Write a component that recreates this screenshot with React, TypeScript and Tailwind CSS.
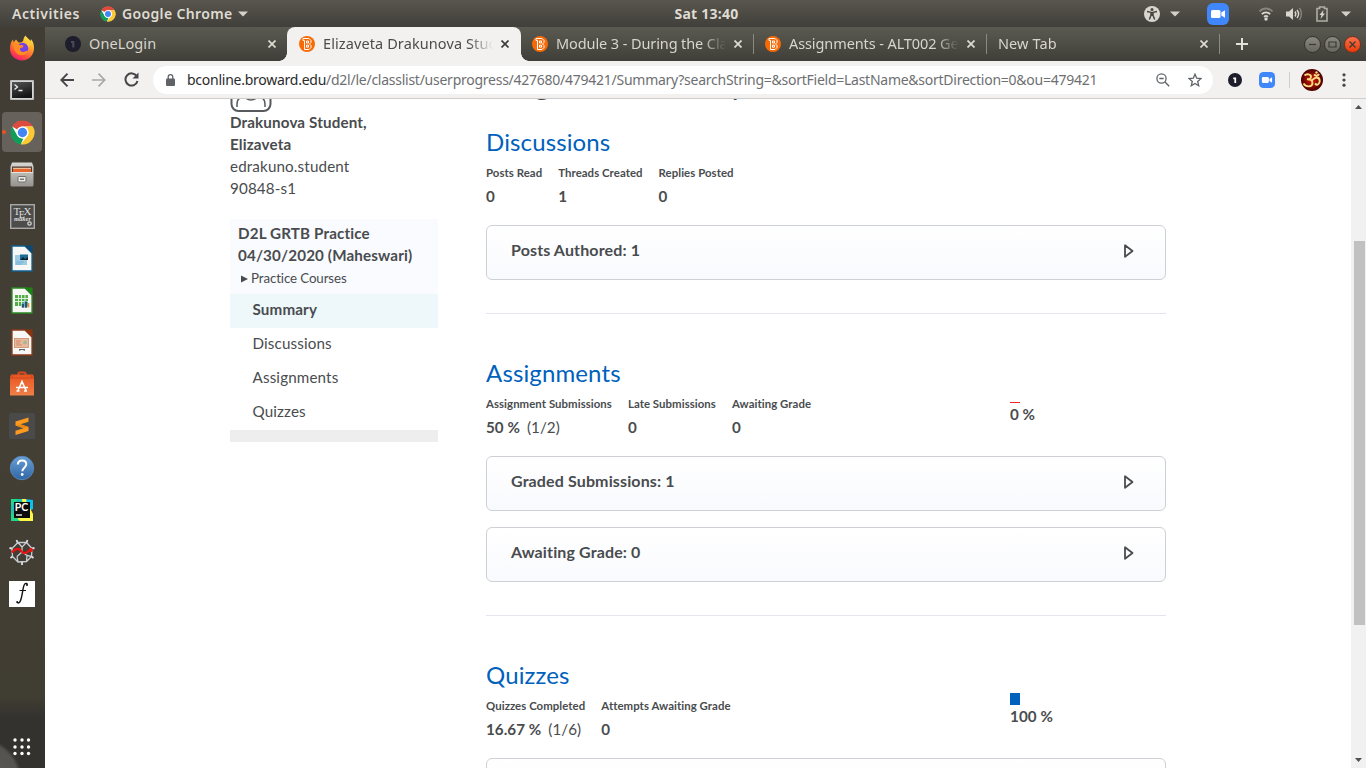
import React from "react";

const UI = "font-['Noto_Sans','Liberation_Sans',sans-serif]";

function ChromeLogo({ size }: { size: number }) {
  return (
    <svg width={size} height={size} viewBox="0 0 48 48" className="shrink-0">
      <circle cx="24" cy="24" r="22" fill="#fff" />
      <path d="M24 1a23 23 0 0 1 19.9 11.500H24a11.500 11.500 0 0 0-10 5.800L4.100 12.500A23 23 0 0 1 24 1z" fill="#dd4b3e" />
      <path d="M4.100 12.500 14 29.700a11.500 11.500 0 0 0 10 5.800l1.800-.2L20.500 46.800A23 23 0 0 1 4.100 12.500z" fill="#109d58" />
      <path d="M43.900 12.500A23 23 0 0 1 20.500 46.800L34 29.700a11.500 11.500 0 0 0 0-11.500l-4-5.700z" fill="#fcc934" />
      <circle cx="24" cy="24" r="11.500" fill="#fff" />
      <circle cx="24" cy="24" r="9" fill="#4285f4" />
    </svg>
  );
}

function Firefox() {
  return (
    <svg width="26" height="26" viewBox="0 0 26 26">
      <defs>
        <linearGradient id="ffx" x1="0.8" y1="0" x2="0.3" y2="1">
          <stop offset="0" stopColor="#fff44f" />
          <stop offset="0.4" stopColor="#ffa02a" />
          <stop offset="0.75" stopColor="#ff4f3c" />
          <stop offset="1" stopColor="#f0157c" />
        </linearGradient>
      </defs>
      <path d="M16.500.5c1 2 3.500 3.500 5 5.500.5-.6.5-1.200.4-2 2.600 3 3.300 6.500 3.100 10-.4 6.500-5.500 11.500-12 11.500S1 20.500 1 14c0-4 1-7.500 3-9.500l.6 3L7 4.500 9.500 7.500c2 0 3.500-.4 4.500-1.500.5-2 1-4 2.500-5.500z" fill="url(#ffx)" />
      <circle cx="13.500" cy="13.500" r="5.700" fill="#7542e5" />
      <path d="M4 9c3-1.500 5 0 6.500 1 2 0 4 0 4 1s-2 2-3.500 2.300c-.5 2 1 3.700 3 3.700 2.500 0 3-1.500 5-1.200-1 3-3.500 4.500-6.500 4.500C8 20.300 4.500 16 4 9z" fill="#ff8c22" />
      <path d="M14 7c3 .3 5.500 2.500 5.500 5.500 1-1 1.500-3 .5-5z" fill="#ffcf3a" />
    </svg>
  );
}

function Terminal() {
  return (
    <svg width="24" height="20" viewBox="0 0 24 20">
      <defs>
        <linearGradient id="term" x1="0" y1="0" x2="0.4" y2="1">
          <stop offset="0" stopColor="#555" />
          <stop offset="1" stopColor="#151515" />
        </linearGradient>
      </defs>
      <rect width="24" height="20" rx="1" fill="#bdbdbd" />
      <rect x="1.500" y="1.500" width="21" height="17" fill="#eee" />
      <rect x="2" y="2" width="20" height="16" fill="url(#term)" />
      <path d="M4.500 4.500 7.500 7l-3 2.500M8.500 10.500h4" fill="none" stroke="#eee" strokeWidth="1.300" />
    </svg>
  );
}

function Files() {
  return (
    <svg width="24" height="25" viewBox="0 0 24 25">
      <defs>
        <linearGradient id="fil" x1="0" y1="0" x2="0" y2="1">
          <stop offset="0" stopColor="#d8d6d2" />
          <stop offset="1" stopColor="#96938e" />
        </linearGradient>
      </defs>
      <path d="M2 .5h20l1.500 4V23a1.500 1.500 0 0 1-1.500 1.500H2A1.500 1.500 0 0 1 .5 23V4.500z" fill="url(#fil)" />
      <rect x="2" y="4.500" width="20" height="5.500" fill="#4c3a30" />
      <path d="M3 6.500h18V10H3z" fill="#e9662a" />
      <path d="M3 6.300h18" stroke="#ffd8b8" />
      <path d="M1 10.500h22" stroke="#e5e3df" />
      <rect x="8" y="14.500" width="8" height="5.500" rx="1" fill="#eceae7" stroke="#706e69" />
      <rect x="10" y="16.500" width="4" height="1.500" fill="#777" />
    </svg>
  );
}

function TexMaker() {
  return (
    <svg width="25" height="25" viewBox="0 0 25 25">
      <rect x=".7" y=".7" width="23.600" height="23.600" fill="#4c4c4b" stroke="#a9a9a7" strokeWidth="1.400" />
      <g fill="#dededc" fontFamily="Liberation Serif, serif">
        <text x="3.500" y="11" fontSize="11">T</text>
        <text x="8.800" y="13.500" fontSize="10">E</text>
        <text x="13.500" y="11" fontSize="11">X</text>
        <text x="4" y="17.300" fontSize="6.500" fontStyle="italic" fontWeight="bold">maker</text>
      </g>
      <circle cx="19.500" cy="19.500" r="1.700" fill="none" stroke="#d5d5d3" strokeWidth="1.300" />
    </svg>
  );
}

function Doc({ color, dark, children }: { color: string; dark: string; children: React.ReactNode }) {
  return (
    <svg width="22" height="27" viewBox="0 0 22 27">
      <path d="M1 1h13l7 7v18H1z" fill="#f7f7f5" stroke={color} strokeWidth="1.300" />
      <path d="M13 .4h8.600V9z" fill={dark} />
      {children}
    </svg>
  );
}

function Software() {
  return (
    <svg width="26" height="26" viewBox="0 0 26 26">
      <defs>
        <linearGradient id="sw" x1="0" y1="0" x2="0" y2="1">
          <stop offset="0" stopColor="#e95420" />
          <stop offset="1" stopColor="#f08048" />
        </linearGradient>
      </defs>
      <path d="M9.500 5V2.500a1 1 0 0 1 1-1h5a1 1 0 0 1 1 1V5" fill="none" stroke="#d64a20" strokeWidth="2" />
      <path d="M2 3.500h22l1 3v18H1v-18z" fill="url(#sw)" />
      <path d="M1 7h24M4 3.500 3 7M22 3.500 23 7" stroke="#c8421c" strokeWidth=".8" />
      <path d="M9 19.500 13 10.500l4 9M10.500 16.500h5M7.500 20h3M15 20h3M7 16.500h12" fill="none" stroke="#fff" strokeWidth="1.600" />
    </svg>
  );
}

function Sublime() {
  return (
    <svg width="26" height="26" viewBox="0 0 26 26">
      <rect width="26" height="26" rx="1.500" fill="#4a4a4a" />
      <path d="M6.500 8.500 19.500 4.500v4.300L11.500 11.300l8 2.700v4L6.500 22v-4.200l8-2.600-8-2.600z" fill="#ff9a1f" />
      <path d="m6.500 12.600 8 2.600 5-1.200-8-2.700z" fill="#e98a10" />
    </svg>
  );
}

function Help() {
  return (
    <svg width="26" height="26" viewBox="0 0 26 26">
      <defs>
        <linearGradient id="hp" x1="0" y1="0" x2="0" y2="1">
          <stop offset="0" stopColor="#6ba0d6" />
          <stop offset="1" stopColor="#2f66a5" />
        </linearGradient>
      </defs>
      <circle cx="13" cy="13" r="11.700" fill="url(#hp)" stroke="#5587bd" />
      <path d="M8.800 9.500c.2-2.700 2-4 4.300-4 2.600 0 4.200 1.500 4.200 3.700 0 3.300-4 3.600-4 7" fill="none" stroke="#fff" strokeWidth="2" />
      <circle cx="13.200" cy="19.500" r="1.400" fill="#fff" />
    </svg>
  );
}

function PyCharm() {
  return (
    <svg width="24" height="24" viewBox="0 0 24 24">
      <path d="M1 1h11l3 11-3 11H1z" fill="#21d789" />
      <path d="M1 8 8 1h7v5L5 22H1z" fill="#1fc4a8" />
      <path d="m14 1 9 1v9l-9 4z" fill="#07c3f2" />
      <path d="M12 1h4l1 5-4 2zM5 23l15-13 3 6v7z" fill="#fcf84a" />
      <path d="M1 15v8h9z" fill="#21d789" />
      <rect x="4" y="4" width="16" height="16" fill="#0b0b0b" />
      <text x="4.800" y="13.300" fontSize="10.500" fontWeight="bold" fill="#fff" fontFamily="Lato, sans-serif">PC</text>
      <path d="M6 17h6" stroke="#fff" strokeWidth="1.300" />
    </svg>
  );
}

function Spyder() {
  return (
    <svg width="26" height="26" viewBox="0 0 26 26" fill="none">
      <path d="m9 3.500 8.500 0 5.500 6-.5 8-5 5-8.500.5-5.500-5.500-.5-8zM13 13 13 8l4.500-4.500M13 8 9 3.500M13 13l-5 4.500M13 13l5 3.500 4.500 1M8 17.500l1 5.500M18 16.500l-.5 6" stroke="#c9ccd3" strokeWidth="1.300" />
      <path d="M8.500 3.500 7.500 1M17.500 3.500 18.500 1M23 9.500l2.500-.5M22.500 17.500 24.500 19M13 23v3M3.500 17.500 1.500 19M3 9.500.5 9" stroke="#dcdfe4" strokeWidth="1.800" />
      <path d="M3 13.500C5 11 8 9 10.500 10.500S13 14.500 16 14c3 0 4-3.500 7-3.500" stroke="#ee1111" strokeWidth="2.200" />
      <circle cx="22" cy="11" r="2" fill="#ee1111" />
    </svg>
  );
}

function FontViewer() {
  return (
    <svg width="26" height="26" viewBox="0 0 26 26">
      <rect width="26" height="26" fill="#fff" />
      <path d="M18.300 3.600c-.2-1.200-1.200-1.400-2-1-1.800.9-2.100 4.600-2.700 8-.6 3.600-1.200 7-2.300 9.500-.7 1.800-2.500 2.600-3.100 1" fill="none" stroke="#111" strokeWidth="1.400" />
      <path d="M10.500 9.500h6.500" stroke="#111" strokeWidth="1" />
      <circle cx="18" cy="4" r="1" fill="#111" />
      <circle cx="8.200" cy="21" r="1" fill="#111" />
    </svg>
  );
}

function Dock() {
  const icons = [
    <Firefox />,
    <Terminal />,
    <ChromeLogo size={25} />,
    <Files />,
    <TexMaker />,
    <Doc color="#11608f" dark="#0b4a74">
      <rect x="4" y="10" width="12" height="10" fill="#9ecbe4" />
      <rect x="9" y="9.500" width="8" height="5.500" fill="#1d6d92" />
      <path d="m9 15 3-3 2 2 3-2v3z" fill="#123" />
      <path d="M5 17h8M5 19h6" stroke="#6fb0d2" />
    </Doc>,
    <Doc color="#2a8a22" dark="#1e8216">
      <rect x="4" y="8" width="13" height="11" fill="#54ab48" />
      <path d="M4 11.500h13M4 14.500h13M7.500 8v11M10.500 8v11M14 8v11" stroke="#e8f5e6" strokeWidth=".9" />
      <path d="M11 20.500v-4h2v4M14 20.500v-6h2v6" stroke="#5ba8d6" />
      <path d="M17.500 20.500V16" stroke="#f18a3c" strokeWidth="1.600" />
    </Doc>,
    <Doc color="#8c3a1a" dark="#8a3410">
      <rect x="3.500" y="9.500" width="14" height="9" fill="#e9b99d" stroke="#c98a68" strokeWidth=".8" />
      <path d="M5 12h5M5 14h4M5 16h6" stroke="#cf8a68" />
      <circle cx="14" cy="13.500" r="2" fill="#a5b890" />
      <path d="M8 20.500h6M8.500 22l1-1.500M13.500 22l-1-1.500" stroke="#666" fill="none" />
    </Doc>,
    <Software />,
    <Sublime />,
    <Help />,
    <PyCharm />,
    <Spyder />,
    <FontViewer />,
  ];
  return (
    <aside className="flex w-[45px] shrink-0 flex-col justify-between bg-[linear-gradient(#413d34_0px,#443f35_400px,#403d32_670px,#34322f_690px,#34322f_741px)]">
      <div className="flex flex-col">
        {icons.map((icon, i) => (
          <div key={i} className="relative flex h-[42px] w-[44px] items-center justify-center">
            {i === 2 && (
              <>
                <div className="absolute inset-y-px left-0.5 w-10 rounded bg-[#66625b]" />
                <div className="absolute left-0.5 top-[19px] size-1 rounded-full bg-[#e95420]" />
              </>
            )}
            <div className="relative">{icon}</div>
          </div>
        ))}
      </div>
      <div className="flex h-[64px] bg-[radial-gradient(circle_at_-20px_76px,#5d5c59_0px,#55534f_38px,transparent_42px)] pl-[13px] pt-[34px]">
        <svg width="18" height="18" viewBox="0 0 18 18" fill="#fff">
          {[2, 9, 15.5].map((y) => [2, 9, 15.5].map((x) => <circle key={`${x}-${y}`} cx={x} cy={y} r="1.700" />))}
        </svg>
      </div>
    </aside>
  );
}

function Caret() {
  return (
    <svg width="10" height="6" viewBox="0 0 10 6">
      <path d="M0 .5h10L5 5.500z" fill="#d3d1cb" />
    </svg>
  );
}

function ZoomApp({ size }: { size: number }) {
  return (
    <svg width={size} height={size} viewBox="0 0 22 22" className="shrink-0">
      <rect width="22" height="22" rx="6" fill="#4087fc" />
      <rect x="4" y="7" width="9.500" height="8" rx="1.500" fill="#fff" />
      <path d="m14.300 9.500 3.700-2.300v7.600l-3.700-2.300z" fill="#fff" />
    </svg>
  );
}

function TopBar() {
  return (
    <header className={`${UI} grid h-[27px] shrink-0 grid-cols-[1fr_auto_1fr] items-center bg-[linear-gradient(#59564e,#413f3a)] text-[14px] font-semibold text-[#dfdbd2]`}>
      <div className="flex items-center pl-3">
        <span className="w-[88px] tracking-[0.55px]">Activities</span>
        <ChromeLogo size={16} />
        <span className="ml-1.5 w-[116px] whitespace-nowrap tracking-[0.35px]">Google Chrome</span>
        <Caret />
      </div>
      <div className="pl-[47px] font-bold tracking-[0.25px]">Sat 13:40</div>
      <div className="flex items-center justify-end pr-[15px]">
        <svg width="16" height="16" viewBox="0 0 16 16">
          <circle cx="8" cy="8" r="8" fill="#d9d6d0" />
          <circle cx="8" cy="3.400" r="1.500" fill="#48463f" />
          <path d="M3 5.500 7 6.300v3L5.300 13.500M13 5.500 9 6.300v3l1.700 4.200M8 6v4" fill="none" stroke="#48463f" strokeWidth="1.500" />
        </svg>
        <span className="ml-2.5 mr-[27px]"><Caret /></span>
        <ZoomApp size={22} />
        <svg width="16" height="14" viewBox="0 0 16 14" className="ml-[29px]" fill="none">
          <path d="M1.500 4.500C5 .5 11 .5 14.500 4.500" stroke="#86837c" strokeWidth="1.800" />
          <path d="M3.800 7.200c2.300-2.500 6.100-2.500 8.400 0M6 9.800c1.200-1 2.800-1 4 0" stroke="#d9d6d0" strokeWidth="1.700" />
          <circle cx="8" cy="12" r="1.700" fill="#d9d6d0" />
        </svg>
        <svg width="17" height="14" viewBox="0 0 17 14" className="ml-3" fill="none">
          <path d="M0 4.500h3L7 1v12L3 9.500H0z" fill="#d9d6d0" />
          <path d="M9 4.500c1 1.500 1 3.500 0 5M11 3c2 2.500 2 5.500 0 8" stroke="#d9d6d0" strokeWidth="1.400" />
          <path d="M13.500 1c2.500 3.500 2.500 8.500 0 12" stroke="#86837c" strokeWidth="1.400" />
        </svg>
        <svg width="12" height="16" viewBox="0 0 12 16" className="ml-[13px]" fill="none">
          <path d="M1 2.500h2.500V1h5v1.500H11V15H1z" stroke="#b0ada6" strokeWidth="1.600" />
          <path d="M7.500 4 3.500 9h2l-1 4 4.500-5.500H6.800z" fill="#d9d6d0" />
        </svg>
        <span className="ml-[13px]"><Caret /></span>
      </div>
    </header>
  );
}

function Cross({ color }: { color: string }) {
  return (
    <svg width="8" height="8" viewBox="0 0 8 8" className="shrink-0">
      <path d="m.5.5 7 7m0-7-7 7" stroke={color} strokeWidth="1.700" />
    </svg>
  );
}

function BIcon() {
  return (
    <svg width="16" height="16" viewBox="0 0 16 16" className="shrink-0">
      <circle cx="8" cy="8" r="8" fill="#f76b07" />
      <path d="M4 2.500h6l2 2v2L10.500 8l1.500 1.500v2l-2 2H5.500V4.500H4zM7.500 5h2v2h-2zM7.500 9.200h2v2h-2z" fill="none" stroke="#fff" strokeWidth="1" />
    </svg>
  );
}

function OneLogin({ size, tone }: { size: number; tone: string }) {
  return (
    <svg width={size} height={size} viewBox="0 0 16 16" className="shrink-0">
      <circle cx="8" cy="8" r="8" fill="#1d1d2b" />
      <path d="M6 5h3.300v6.500H7.300V7H6z" fill={tone} />
    </svg>
  );
}

function WindowButton({ close, children }: { close?: boolean; children: React.ReactNode }) {
  return (
    <div className={`flex size-[17px] items-center justify-center rounded-full border ${close ? "border-[#7d3018] bg-[linear-gradient(#f9724c,#e83a08)]" : "border-[#34322e] bg-[linear-gradient(#8b8880,#69665f)]"}`}>
      <svg width="9" height="9" viewBox="0 0 9 9" fill="none" stroke="#3a3934" strokeWidth="1.200">
        {children}
      </svg>
    </div>
  );
}

function Tab({ title, icon, spacing, separator }: { title: string; icon?: React.ReactNode; spacing: string; separator?: boolean }) {
  return (
    <div className="relative flex h-full w-[233px] items-center pl-[11px] pr-[12px]">
      {icon && <span className="mr-2">{icon}</span>}
      <div className={`flex-1 overflow-hidden whitespace-nowrap [mask-image:linear-gradient(90deg,#000_calc(100%-24px),transparent)] ${spacing}`}>{title}</div>
      <span className="ml-2"><Cross color="#dfdbd2" /></span>
      {separator && <div className="absolute right-0 top-[7px] h-5 w-px bg-[#8b8a84]" />}
    </div>
  );
}

function TabStrip() {
  return (
    <div className={`${UI} flex h-[34px] shrink-0 items-center bg-[linear-gradient(#5b5a52,#3f3e38)] text-[14.5px] text-[#d8d5cc]`}>
      <div className="flex h-full w-[242px] items-center pl-5 pr-[11px]">
        <OneLogin size={16} tone="#4a4a58" />
        <span className="ml-2 flex-1 tracking-[0.1px]">OneLogin</span>
        <Cross color="#dfdbd2" />
      </div>
      <div className="relative flex h-full w-[234px] items-center rounded-t-lg bg-[#f2f1f0] pl-3 pr-3 text-[#4c4c4c]">
        <div className="absolute -left-2 bottom-0 size-2 bg-[radial-gradient(circle_at_0_0,transparent_7.5px,#f2f1f0_8px)]" />
        <div className="absolute -right-2 bottom-0 size-2 bg-[radial-gradient(circle_at_100%_0,transparent_7.5px,#f2f1f0_8px)]" />
        <BIcon />
        <div className="ml-2 flex-1 overflow-hidden whitespace-nowrap tracking-[0.1px] [mask-image:linear-gradient(90deg,#000_calc(100%-24px),transparent)]">Elizaveta Drakunova Student</div>
        <span className="ml-2"><Cross color="#3d3d3d" /></span>
      </div>
      <Tab title="Module 3 - During the Class" icon={<BIcon />} spacing="tracking-[-0.1px]" separator />
      <Tab title="Assignments - ALT002 General" icon={<BIcon />} spacing="tracking-[-0.1px]" separator />
      <Tab title="New Tab" spacing="tracking-[0.1px]" separator />
      <svg width="12" height="12" viewBox="0 0 12 12" className="ml-4">
        <path d="M6 0v12M0 6h12" stroke="#e3e0d8" strokeWidth="2" />
      </svg>
      <div className="ml-auto flex gap-[3px] pr-[5px]">
        <WindowButton><path d="M1 4.500h7" /></WindowButton>
        <WindowButton><path d="M1 2h7v5H1z" /></WindowButton>
        <WindowButton close><path d="m1.500 1.500 6 6m0-6-6 6" /></WindowButton>
      </div>
    </div>
  );
}

function Toolbar() {
  return (
    <div className={`${UI} flex h-[38px] shrink-0 items-center border-b border-[#cfcecd] bg-[#f2f1f0] pl-[15px] pr-[20px]`}>
      <svg width="14" height="14" viewBox="0 0 14 14" fill="none" stroke="#45464a" strokeWidth="1.900">
        <path d="M14 7H1.500M7.500.7 1.300 7l6.200 6.300" />
      </svg>
      <svg width="14" height="14" viewBox="0 0 14 14" className="ml-[18px]" fill="none" stroke="#a9a8a8" strokeWidth="1.700">
        <path d="M0 7h12.500M6.500.7 12.700 7l-6.200 6.300" />
      </svg>
      <svg width="15" height="15" viewBox="0 0 15 15" className="ml-[18px]" fill="none">
        <path d="M12.800 4.300A6.100 6.100 0 1 0 13.500 9" stroke="#45464a" strokeWidth="2" />
        <path d="M14.500.5v6h-6z" fill="#45464a" />
      </svg>
      <div className="ml-[14px] flex h-7 w-[1060px] items-center rounded-full bg-white pl-[13px] pr-[11px]">
        <svg width="9" height="12" viewBox="0 0 9 12">
          <path d="M2.200 5V3a2.300 2.300 0 0 1 4.600 0v2" fill="none" stroke="#5f6368" strokeWidth="1.300" />
          <rect y="4.500" width="9" height="7.500" rx="1" fill="#5f6368" />
        </svg>
        <div className="ml-3 flex-1 whitespace-nowrap pb-px text-[14px] tracking-[-0.255px] text-[#6e6f72]">
          <span className="text-[#2b2b2b]">bconline.broward.edu</span>/d2l/le/classlist/userprogress/427680/479421/Summary?searchString=&amp;sortField=LastName&amp;sortDirection=0&amp;ou=479421
        </div>
        <svg width="14" height="14" viewBox="0 0 14 14" fill="none" stroke="#5f6368">
          <circle cx="5.500" cy="5.500" r="4.600" strokeWidth="1.300" />
          <path d="M3.300 5.500h4.400M9 9l4.200 4.200" strokeWidth="1.400" />
        </svg>
        <svg width="14" height="14" viewBox="0 0 14 14" className="ml-[18px]" fill="none">
          <path d="m7 1.200 1.700 4 4.300.4-3.300 2.800 1 4.300L7 10.400l-3.700 2.300 1-4.300L1 5.600l4.300-.4z" stroke="#5f6368" strokeWidth="1.300" />
        </svg>
      </div>
      <span className="ml-[15px]"><OneLogin size={14} tone="#fff" /></span>
      <span className="ml-[17px]"><ZoomApp size={16} /></span>
      <div className="ml-[14px] h-4 w-px bg-[#cfcecd]" />
      <svg width="22" height="22" viewBox="0 0 22 22" className="ml-[11px]">
        <defs>
          <radialGradient id="om">
            <stop offset="0" stopColor="#e01808" />
            <stop offset="1" stopColor="#4a0000" />
          </radialGradient>
        </defs>
        <circle cx="11" cy="11" r="11" fill="url(#om)" />
        <path d="M3.500 6.500c2-2 6.500-1.500 6.500 1.200 0 2-2 2.700-4 2.500 3-.2 5.500 1 5.500 3.800 0 4.200-6.500 4.500-9 .5M10.500 11c2 .5 2.500-2.500 5-2.500 2.200 0 3.200 1.700 3.200 3.500 0 3-2.500 5-4.700 2.500M13 5.500c1.500 1.700 4 1.500 5-.5" fill="none" stroke="#f6dc80" strokeWidth="1.900" />
        <circle cx="15.500" cy="3.500" r="1.200" fill="#f6dc80" />
      </svg>
      <svg width="4" height="14" viewBox="0 0 4 14" className="ml-auto" fill="#45464a">
        <circle cx="2" cy="1.800" r="1.600" /><circle cx="2" cy="7" r="1.600" /><circle cx="2" cy="12.200" r="1.600" />
      </svg>
    </div>
  );
}

function Stat({ label, value, detail }: { label: string; value: string; detail?: string }) {
  return (
    <div className="whitespace-nowrap">
      <div className="h-[22px] text-[11.4px] leading-[24px] font-bold tracking-[0.06px]">{label}</div>
      <div className="mt-px h-6 text-[15.2px] leading-6 font-bold tracking-[0.05px]">
        {value}
        {detail && <span className="ml-[7px] font-normal">{detail}</span>}
      </div>
    </div>
  );
}

function Expander({ title }: { title: string }) {
  return (
    <div className="flex h-[55px] items-start justify-between rounded-md border border-[#cdd0d5] bg-[linear-gradient(#ffffff,#f9fafe)] pl-6 pr-[31px] pt-[13px]">
      <span className="text-[16px] leading-[22px] font-bold tracking-[0.13px]">{title}</span>
      <svg width="10" height="14" viewBox="0 0 10 14" className="mt-[5px]">
        <path d="M1 1.200v11.600L8.500 7z" fill="none" stroke="#494c4e" strokeWidth="1.800" strokeLinejoin="round" />
      </svg>
    </div>
  );
}

function Section({ title, stats, grade, children }: { title: string; stats: React.ReactNode; grade?: React.ReactNode; children: React.ReactNode }) {
  return (
    <section>
      <h2 className="h-[36px] text-[24px] leading-[34px] tracking-[0.13px] text-[#0061bd]">{title}</h2>
      <div className="flex h-[47px]">
        <div className="flex w-[524px] gap-4">{stats}</div>
        {grade}
      </div>
      <div className="mt-[17px] flex flex-col gap-4">{children}</div>
    </section>
  );
}

function Content() {
  const links = ["Discussions", "Assignments", "Quizzes"];
  return (
    <main className="flex min-h-0 flex-1 overflow-hidden bg-white font-['Lato','Liberation_Sans',sans-serif] text-[15.2px] text-[#494c4e]">
      <div className="flex flex-1 pl-[185px]">
        <div className="w-[208px] shrink-0 tracking-[0.14px]">
          <svg width="42" height="13" viewBox="0 0 42 13" className="-mb-px block" fill="none" stroke="#565a5c">
            <path d="M1.500-2v7a7 7 0 0 0 7 7h25a7 7 0 0 0 7-7v-7" strokeWidth="2" />
            <path d="M7 8V5c0-3 1-5 3-6M35 8V5c0-3-1-5-3-6M15-2c3 4 9 4 12 0" strokeWidth="1.500" />
          </svg>
          <div className="leading-[22px]">
            <div className="font-bold">Drakunova Student,<br />Elizaveta</div>
            <div>edrakuno.student</div>
            <div>90848-s1</div>
          </div>
          <div className="mt-5 h-[75px] bg-[#f9fbff] pl-2 pt-[3px] leading-[22px]">
            <div className="whitespace-nowrap font-bold">D2L GRTB Practice<br />04/30/2020 (Maheswari)</div>
            <div className="flex items-center gap-[3px] pl-[3px] pt-px text-[13.3px] leading-[23px] tracking-[-0.1px]">
              <svg width="7" height="8" viewBox="0 0 7 8"><path d="M0 .5 7 4 0 7.500z" fill="#494c4e" /></svg>
              Practice Courses
            </div>
          </div>
          <div className="h-[34px] bg-[#eef7fa] pl-[22.5px] leading-[30px] font-bold">Summary</div>
          {links.map((l) => (
            <div key={l} className="h-[34px] pl-[22.5px] leading-[30px]">{l}</div>
          ))}
          <div className="h-3 bg-[#eeeeee]" />
        </div>
        <div className="ml-12 w-[680px] shrink-0">
          <div className="relative h-[26px]">
            <h1 className="absolute -top-[37px] left-0 whitespace-nowrap text-[32px] leading-[40px]">Progress Summary</h1>
          </div>
          <Section
            title="Discussions"
            stats={<><Stat label="Posts Read" value="0" /><Stat label="Threads Created" value="1" /><Stat label="Replies Posted" value="0" /></>}
          >
            <Expander title="Posts Authored: 1" />
          </Section>
          <div className="mb-[42px] mt-[33px] h-px bg-[#e3e6ef]" />
          <Section
            title="Assignments"
            stats={<><Stat label="Assignment Submissions" value="50 %" detail="(1/2)" /><Stat label="Late Submissions" value="0" /><Stat label="Awaiting Grade" value="0" /></>}
            grade={
              <div className="pt-[10px] font-bold">
                <div className="h-px w-2.5 bg-[#f0262a]" />
                <div className="leading-[22px]">0 %</div>
              </div>
            }
          >
            <Expander title="Graded Submissions: 1" />
            <Expander title="Awaiting Grade: 0" />
          </Section>
          <div className="mb-[42px] mt-[33px] h-px bg-[#e3e6ef]" />
          <Section
            title="Quizzes"
            stats={<><Stat label="Quizzes Completed" value="16.67 %" detail="(1/6)" /><Stat label="Attempts Awaiting Grade" value="0" /></>}
            grade={
              <div className="-mt-px font-bold tracking-[0.1px]">
                <div className="h-3 w-2.5 bg-[#0061bd]" />
                <div className="leading-[22px]">100 %</div>
              </div>
            }
          >
            <Expander title="" />
          </Section>
        </div>
      </div>
      <div className="flex w-[15px] shrink-0 flex-col items-center bg-[#f1f1f1]">
        <svg width="7" height="4" viewBox="0 0 7 4" className="mt-[6px]"><path d="M0 4 3.500 0 7 4z" fill="#505050" /></svg>
        <div className="ml-px mt-[132px] h-[384px] w-[11px] bg-[#c1c1c1]" />
        <svg width="7" height="4" viewBox="0 0 7 4" className="mb-[6px] mt-auto"><path d="M0 0h7L3.500 4z" fill="#505050" /></svg>
      </div>
    </main>
  );
}

export default function App() {
  return (
    <div className="flex h-screen w-screen flex-col overflow-hidden">
      <TopBar />
      <div className="flex min-h-0 flex-1">
        <Dock />
        <div className="flex min-w-0 flex-1 flex-col">
          <TabStrip />
          <Toolbar />
          <Content />
        </div>
      </div>
    </div>
  );
}
